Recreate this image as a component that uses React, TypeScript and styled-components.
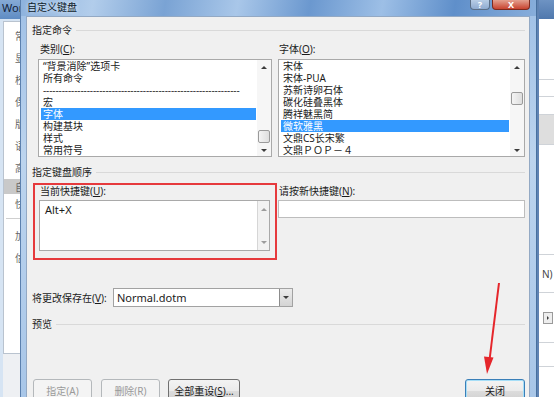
import React from 'react';
import styled, { createGlobalStyle, css } from 'styled-components';

const Global = createGlobalStyle`
  html, body { margin: 0; padding: 0; background: #ffffff; }
  * { box-sizing: border-box; }
`;

const FONT = `"Noto Sans", "Noto Sans CJK SC", sans-serif`;

const Screen = styled.div`
  position: relative;
  width: 554px;
  height: 397px;
  overflow: hidden;
  display: flex;
  font-family: ${FONT};
  font-size: 10px;
  line-height: 12px;
  color: #1b1b1b;
`;

/* ---------- background window (left) ---------- */
const BgLeft = styled.div`
  width: 20px;
  flex: none;
  display: flex;
  flex-direction: column;
  background: #d6e4f3;
`;
const BgTitle = styled.div`
  height: 19px;
  flex: none;
  padding: 1px 0 0 2px;
  background: linear-gradient(180deg, #86aad6, #5f8cc3);
  font-size: 11px;
  line-height: 14px;
  color: #14233a;
  white-space: nowrap;
  overflow: hidden;
`;
const BgLeftBody = styled.div`
  flex: 1;
  display: flex;
  flex-direction: column;
  padding: 2px 0 0 3px;
`;
const Sidebar = styled.div`
  height: 333px;
  flex: none;
  display: flex;
  flex-direction: column;
  padding-top: 3px;
  background: #ffffff;
  border: 1px solid #b9c3cf;
  border-right: none;
`;
const SideItem = styled.div<{ $h: number; $sel?: boolean }>`
  height: ${p => p.$h}px;
  flex: none;
  display: flex;
  align-items: center;
  padding-left: 11px;
  white-space: nowrap;
  overflow: hidden;
  color: #666;
  ${p => p.$sel && css`background: #c9c9c9;`}
`;
const SideSep = styled.div`
  height: 1px;
  margin: 4px 0 6px 2px;
  background: #cfcfcf;
`;
const BgLeftRest = styled.div`
  flex: 1;
  background: #eef0f3;
`;

/* ---------- background window (right) ---------- */
const BgRight = styled.div`
  flex: 1;
  display: flex;
  flex-direction: column;
  background: #ffffff;
  border-left: 2px solid #5f83b3;
`;
const BgRightTitle = styled.div`
  height: 19px;
  flex: none;
  background: linear-gradient(180deg, #6e93c3, #4f78ad);
`;
const BgRightCell = styled.div<{ $h: number; $gray?: boolean }>`
  height: ${p => p.$h}px;
  flex: none;
  display: flex;
  align-items: center;
  padding-left: 3px;
  border-bottom: 1px solid #cfd3d8;
  font-size: 10px;
  color: #444;
  white-space: nowrap;
  ${p => p.$gray && css`background: #dedede;`}
`;
const MiniBtn = styled.div`
  width: 10px;
  height: 12px;
  margin-left: 1px;
  border: 1px solid #9a9a9a;
  background: #eeeeee;
  display: flex;
  align-items: center;
  justify-content: center;
`;

/* ---------- dialog ---------- */
const Dialog = styled.div`
  width: 517px;
  flex: none;
  display: flex;
  flex-direction: column;
  padding: 0 6px 0 5px;
  background: linear-gradient(180deg, #9fc0e6 0%, #bcd4ee 40%, #a8c6e8 100%);
  border-left: 1px solid #5b80ae;
  border-right: 1px solid #47709f;
`;
const TitleBar = styled.div`
  height: 16px;
  flex: none;
  display: flex;
  align-items: flex-start;
  margin: 0 -6px 0 -5px;
  padding: 0 6px 0 6px;
  background: linear-gradient(100deg, #8db2dd 0%, #b2cdeb 14%, #7aa3d4 28%, #a9c7e9 42%, #6b98cf 56%, #9dbfe6 70%, #5f8fca 84%, #88aedb 100%);
`;
const TitleText = styled.div`
  flex: 1;
  padding-top: 1px;
  font-size: 10px;
  line-height: 12px;
  color: #0d1a2b;
  text-shadow: 0 0 4px rgba(255, 255, 255, 0.9);
`;
const CaptionBtn = styled.div<{ $close?: boolean }>`
  width: ${p => (p.$close ? 38 : 20)}px;
  height: 10px;
  margin-left: 2px;
  display: flex;
  align-items: center;
  justify-content: center;
  border: 1px solid #5c6f87;
  border-top: none;
  border-radius: 0 0 4px 4px;
  font-size: 9px;
  line-height: 9px;
  font-weight: bold;
  color: #ffffff;
  ${p =>
    p.$close
      ? css`background: linear-gradient(180deg, #e4a08f, #c8432f);
            border-color: #7e2a1e;`
      : css`background: linear-gradient(180deg, #b8cde6, #8fabd0);`}
`;
const Client = styled.div`
  flex: 1;
  display: flex;
  flex-direction: column;
  padding: 7px 4px 0 5px;
  background: #f0f0f0;
  border: 1px solid #93a9c4;
  border-bottom: none;
`;
const GroupHeader = styled.div<{ $mt: number }>`
  height: 12px;
  flex: none;
  margin-top: ${p => p.$mt}px;
  display: flex;
  align-items: center;
  gap: 4px;
  white-space: nowrap;
  &::after {
    content: '';
    flex: 1;
    height: 1px;
    background: #d9d9d9;
  }
`;
const Columns = styled.div`
  display: flex;
  gap: 6px;
  margin-top: 7px;
  padding-left: 6px;
`;
const Column = styled.div<{ $w?: number }>`
  display: flex;
  flex-direction: column;
  ${p => (p.$w ? css`width: ${p.$w}px; flex: none;` : css`flex: 1;`)}
`;
const FieldLabel = styled.div<{ $pl?: number }>`
  height: 12px;
  padding-left: ${p => p.$pl ?? 0}px;
  white-space: nowrap;
  u { text-decoration: underline; text-underline-offset: 1px; }
`;
const ListBox = styled.div<{ $h: number; $mt: number }>`
  height: ${p => p.$h}px;
  margin-top: ${p => p.$mt}px;
  display: flex;
  background: #ffffff;
  border: 1px solid #a9a9a9;
`;
const ListItems = styled.div`
  flex: 1;
  min-width: 0;
  padding: 0 1px 0 2px;
  display: flex;
  flex-direction: column;
  overflow: hidden;
`;
const ListRow = styled.div<{ $sel?: boolean }>`
  height: 12px;
  flex: none;
  padding-left: 2px;
  white-space: nowrap;
  overflow: hidden;
  ${p => p.$sel && css`background: #3399ff; color: #ffffff;`}
`;
const Dashes = styled.div`
  height: 12px;
  flex: none;
  padding-left: 2px;
  white-space: nowrap;
  overflow: hidden;
  color: #333;
  letter-spacing: -0.1px;
`;
const Scrollbar = styled.div<{ $w: number; $disabled?: boolean }>`
  width: ${p => p.$w}px;
  flex: none;
  display: flex;
  flex-direction: column;
  background: ${p => (p.$disabled ? '#f2f2f2' : '#f6f6f6')};
  ${p => p.$disabled && css`border-left: 1px solid #d6d6d6;`}
`;
const ScrollArrow = styled.div<{ $h: number; $bottom?: boolean }>`
  height: ${p => p.$h}px;
  flex: none;
  display: flex;
  align-items: center;
  justify-content: center;
  ${p => p.$bottom && css`margin-top: auto;`}
`;
const Tri = styled.span<{ $dir: 'up' | 'down'; $muted?: boolean; $size?: number }>`
  width: 0;
  height: 0;
  border-left: ${p => p.$size ?? 3}px solid transparent;
  border-right: ${p => p.$size ?? 3}px solid transparent;
  ${p => {
    const c = p.$muted ? '#9c9c9c' : '#3c3c3c';
    const s = p.$size ?? 3;
    return p.$dir === 'up'
      ? css`border-bottom: ${s}px solid ${c};`
      : css`border-top: ${s}px solid ${c};`;
  }}
`;
const Thumb = styled.div`
  height: 13px;
  flex: none;
  margin: 0 1px;
  border: 1px solid #9a9a9a;
  border-radius: 2px;
  background: linear-gradient(90deg, #f4f4f4, #dedede);
`;

const KeyRow = styled.div`
  display: flex;
  gap: 1px;
  margin-top: 5px;
`;
const Highlight = styled.div`
  width: 244px;
  flex: none;
  margin-left: 1px;
  display: flex;
  flex-direction: column;
  padding: 0 5px 7px 4px;
  border: 2px solid #e63a3d;
`;
const RightKeyCol = styled.div`
  flex: 1;
  display: flex;
  flex-direction: column;
  padding-top: 2px;
`;
const TextBox = styled.div`
  height: 18px;
  margin-top: 3px;
  background: #ffffff;
  border: 1px solid #bdbdbd;
`;
const KeyText = styled.div`
  padding: 2px 0 0 3px;
  font-size: 11px;
  line-height: 13px;
`;

const SaveRow = styled.div`
  display: flex;
  align-items: center;
  height: 19px;
  margin-top: 28px;
`;
const SaveLabel = styled(FieldLabel)`
  width: 81px;
  flex: none;
`;
const Combo = styled.div`
  width: 180px;
  height: 19px;
  display: flex;
  background: #ffffff;
  border: 1px solid #a2a2a2;
`;
const ComboText = styled.div`
  flex: 1;
  padding-left: 3px;
  font-size: 11px;
  line-height: 17px;
`;
const ComboBtn = styled.div`
  width: 13px;
  flex: none;
  display: flex;
  align-items: center;
  justify-content: center;
  background: linear-gradient(180deg, #ececec, #d4d4d4);
  border-left: 1px solid #8c8c8c;
`;

const ButtonRow = styled.div`
  display: flex;
  align-items: flex-start;
  margin-top: 49px;
  padding-left: 1px;
`;
const Button = styled.div<{ $w: number; $ml?: number; $disabled?: boolean; $default?: boolean; $auto?: boolean }>`
  width: ${p => p.$w}px;
  height: 23px;
  flex: none;
  margin-left: ${p => (p.$auto ? 'auto' : `${p.$ml ?? 0}px`)};
  display: flex;
  align-items: center;
  justify-content: center;
  border: 1px solid #707070;
  border-radius: 3px;
  background: linear-gradient(180deg, #f3f3f3 0%, #ebebeb 50%, #dddddd 51%, #d0d0d0 100%);
  white-space: nowrap;
  u { text-decoration: underline; text-underline-offset: 1px; }
  ${p => p.$disabled && css`
    border-color: #b4b8bb;
    background: #f4f4f4;
    color: #9a9a9a;
  `}
  ${p => p.$default && css`
    border-color: #3a7fb8;
    box-shadow: inset 0 0 0 1px #a6def7;
  `}
`;

const ArrowOverlay = styled.svg`
  position: absolute;
  left: 0;
  top: 0;
  pointer-events: none;
`;

const categories = ['“背景消除”选项卡', '所有命令', '---', '宏', '字体', '构建基块', '样式', '常用符号'];
const fonts = ['宋体', '宋体-PUA', '苏新诗卵石体', '碳化硅叠黑体', '腾祥魅黑简', '微软雅黑', '文鼎CS长宋繁', '文鼎ＰＯＰ－４'];

const sideItems: { t: string; h: number; sel?: boolean }[] = [
  { t: '常规', h: 22 },
  { t: '显示', h: 22 },
  { t: '校对', h: 22 },
  { t: '保存', h: 22 },
  { t: '版式', h: 22 },
  { t: '语言', h: 22 },
  { t: '高级', h: 22 },
  { t: '自定义功能区', h: 15, sel: true },
  { t: '快速访问工具栏', h: 20 },
];
const sideItems2 = [
  { t: '加载项', h: 22 },
  { t: '信任中心', h: 22 },
];

function List({ items, selected, thumbTop }: { items: string[]; selected: number; thumbTop: number }) {
  return (
    <ListBox $h={98} $mt={4}>
      <ListItems>
        {items.map((it, i) =>
          it === '---' ? (
            <Dashes key={i}>{'-'.repeat(63)}</Dashes>
          ) : (
            <ListRow key={i} $sel={i === selected}>
              {it}
            </ListRow>
          )
        )}
      </ListItems>
      <Scrollbar $w={14}>
        <ScrollArrow $h={14}>
          <Tri $dir="up" />
        </ScrollArrow>
        <Thumb style={{ marginTop: thumbTop }} />
        <ScrollArrow $h={12} $bottom>
          <Tri $dir="down" />
        </ScrollArrow>
      </Scrollbar>
    </ListBox>
  );
}

export default function App() {
  return (
    <>
      <Global />
      <Screen>
        <BgLeft>
          <BgTitle>Word</BgTitle>
          <BgLeftBody>
            <Sidebar>
              {sideItems.map(s => (
                <SideItem key={s.t} $h={s.h} $sel={s.sel}>
                  {s.t}
                </SideItem>
              ))}
              <SideSep />
              {sideItems2.map(s => (
                <SideItem key={s.t} $h={s.h}>
                  {s.t}
                </SideItem>
              ))}
            </Sidebar>
            <BgLeftRest />
          </BgLeftBody>
        </BgLeft>

        <Dialog>
          <TitleBar>
            <TitleText>自定义键盘</TitleText>
            <CaptionBtn>?</CaptionBtn>
            <CaptionBtn $close>X</CaptionBtn>
          </TitleBar>
          <Client>
            <GroupHeader $mt={0}>指定命令</GroupHeader>
            <Columns>
              <Column $w={234}>
                <FieldLabel $pl={2}>
                  类别(<u>C</u>):
                </FieldLabel>
                <List items={categories} selected={4} thumbTop={56} />
              </Column>
              <Column>
                <FieldLabel $pl={1}>
                  字体(<u>O</u>):
                </FieldLabel>
                <List items={fonts} selected={5} thumbTop={18} />
              </Column>
            </Columns>

            <GroupHeader $mt={9}>指定键盘顺序</GroupHeader>
            <KeyRow>
              <Highlight>
                <FieldLabel $pl={1}>
                  当前快捷键(<u>U</u>):
                </FieldLabel>
                <ListBox $h={51} $mt={3}>
                  <ListItems>
                    <KeyText>Alt+X</KeyText>
                  </ListItems>
                  <Scrollbar $w={12} $disabled>
                    <ScrollArrow $h={16}>
                      <Tri $dir="up" $muted />
                    </ScrollArrow>
                    <ScrollArrow $h={16} $bottom>
                      <Tri $dir="down" $muted />
                    </ScrollArrow>
                  </Scrollbar>
                </ListBox>
              </Highlight>
              <RightKeyCol>
                <FieldLabel $pl={1}>
                  请按新快捷键(<u>N</u>):
                </FieldLabel>
                <TextBox />
              </RightKeyCol>
            </KeyRow>

            <SaveRow>
              <SaveLabel>
                将更改保存在(<u>V</u>):
              </SaveLabel>
              <Combo>
                <ComboText>Normal.dotm</ComboText>
                <ComboBtn>
                  <Tri $dir="down" $size={3} />
                </ComboBtn>
              </Combo>
            </SaveRow>

            <GroupHeader $mt={11}>预览</GroupHeader>

            <ButtonRow>
              <Button $w={59} $disabled>
                指定(A)
              </Button>
              <Button $w={59} $ml={9} $disabled>
                删除(R)
              </Button>
              <Button $w={72} $ml={8}>
                全部重设(<u>S</u>)...
              </Button>
              <Button $w={60} $auto $default>
                关闭
              </Button>
            </ButtonRow>
          </Client>
        </Dialog>

        <BgRight>
          <BgRightTitle />
          <BgRightCell $h={61} />
          <BgRightCell $h={17} />
          <BgRightCell $h={18} />
          <BgRightCell $h={30} $gray />
          <BgRightCell $h={110} />
          <BgRightCell $h={38}>N)</BgRightCell>
          <BgRightCell $h={50}>
            <MiniBtn>
              <Tri $dir="down" $size={2} style={{ transform: 'rotate(-90deg)' }} />
            </MiniBtn>
          </BgRightCell>
          <BgRightCell $h={24} />
        </BgRight>

        <ArrowOverlay width={554} height={397} viewBox="0 0 554 397">
          <line x1={499} y1={283} x2={489.5} y2={360} stroke="#e5262b" strokeWidth={2} />
          <polygon points="487,374 493.5,357.5 484,356.5" fill="#e5262b" />
        </ArrowOverlay>
      </Screen>
    </>
  );
}
